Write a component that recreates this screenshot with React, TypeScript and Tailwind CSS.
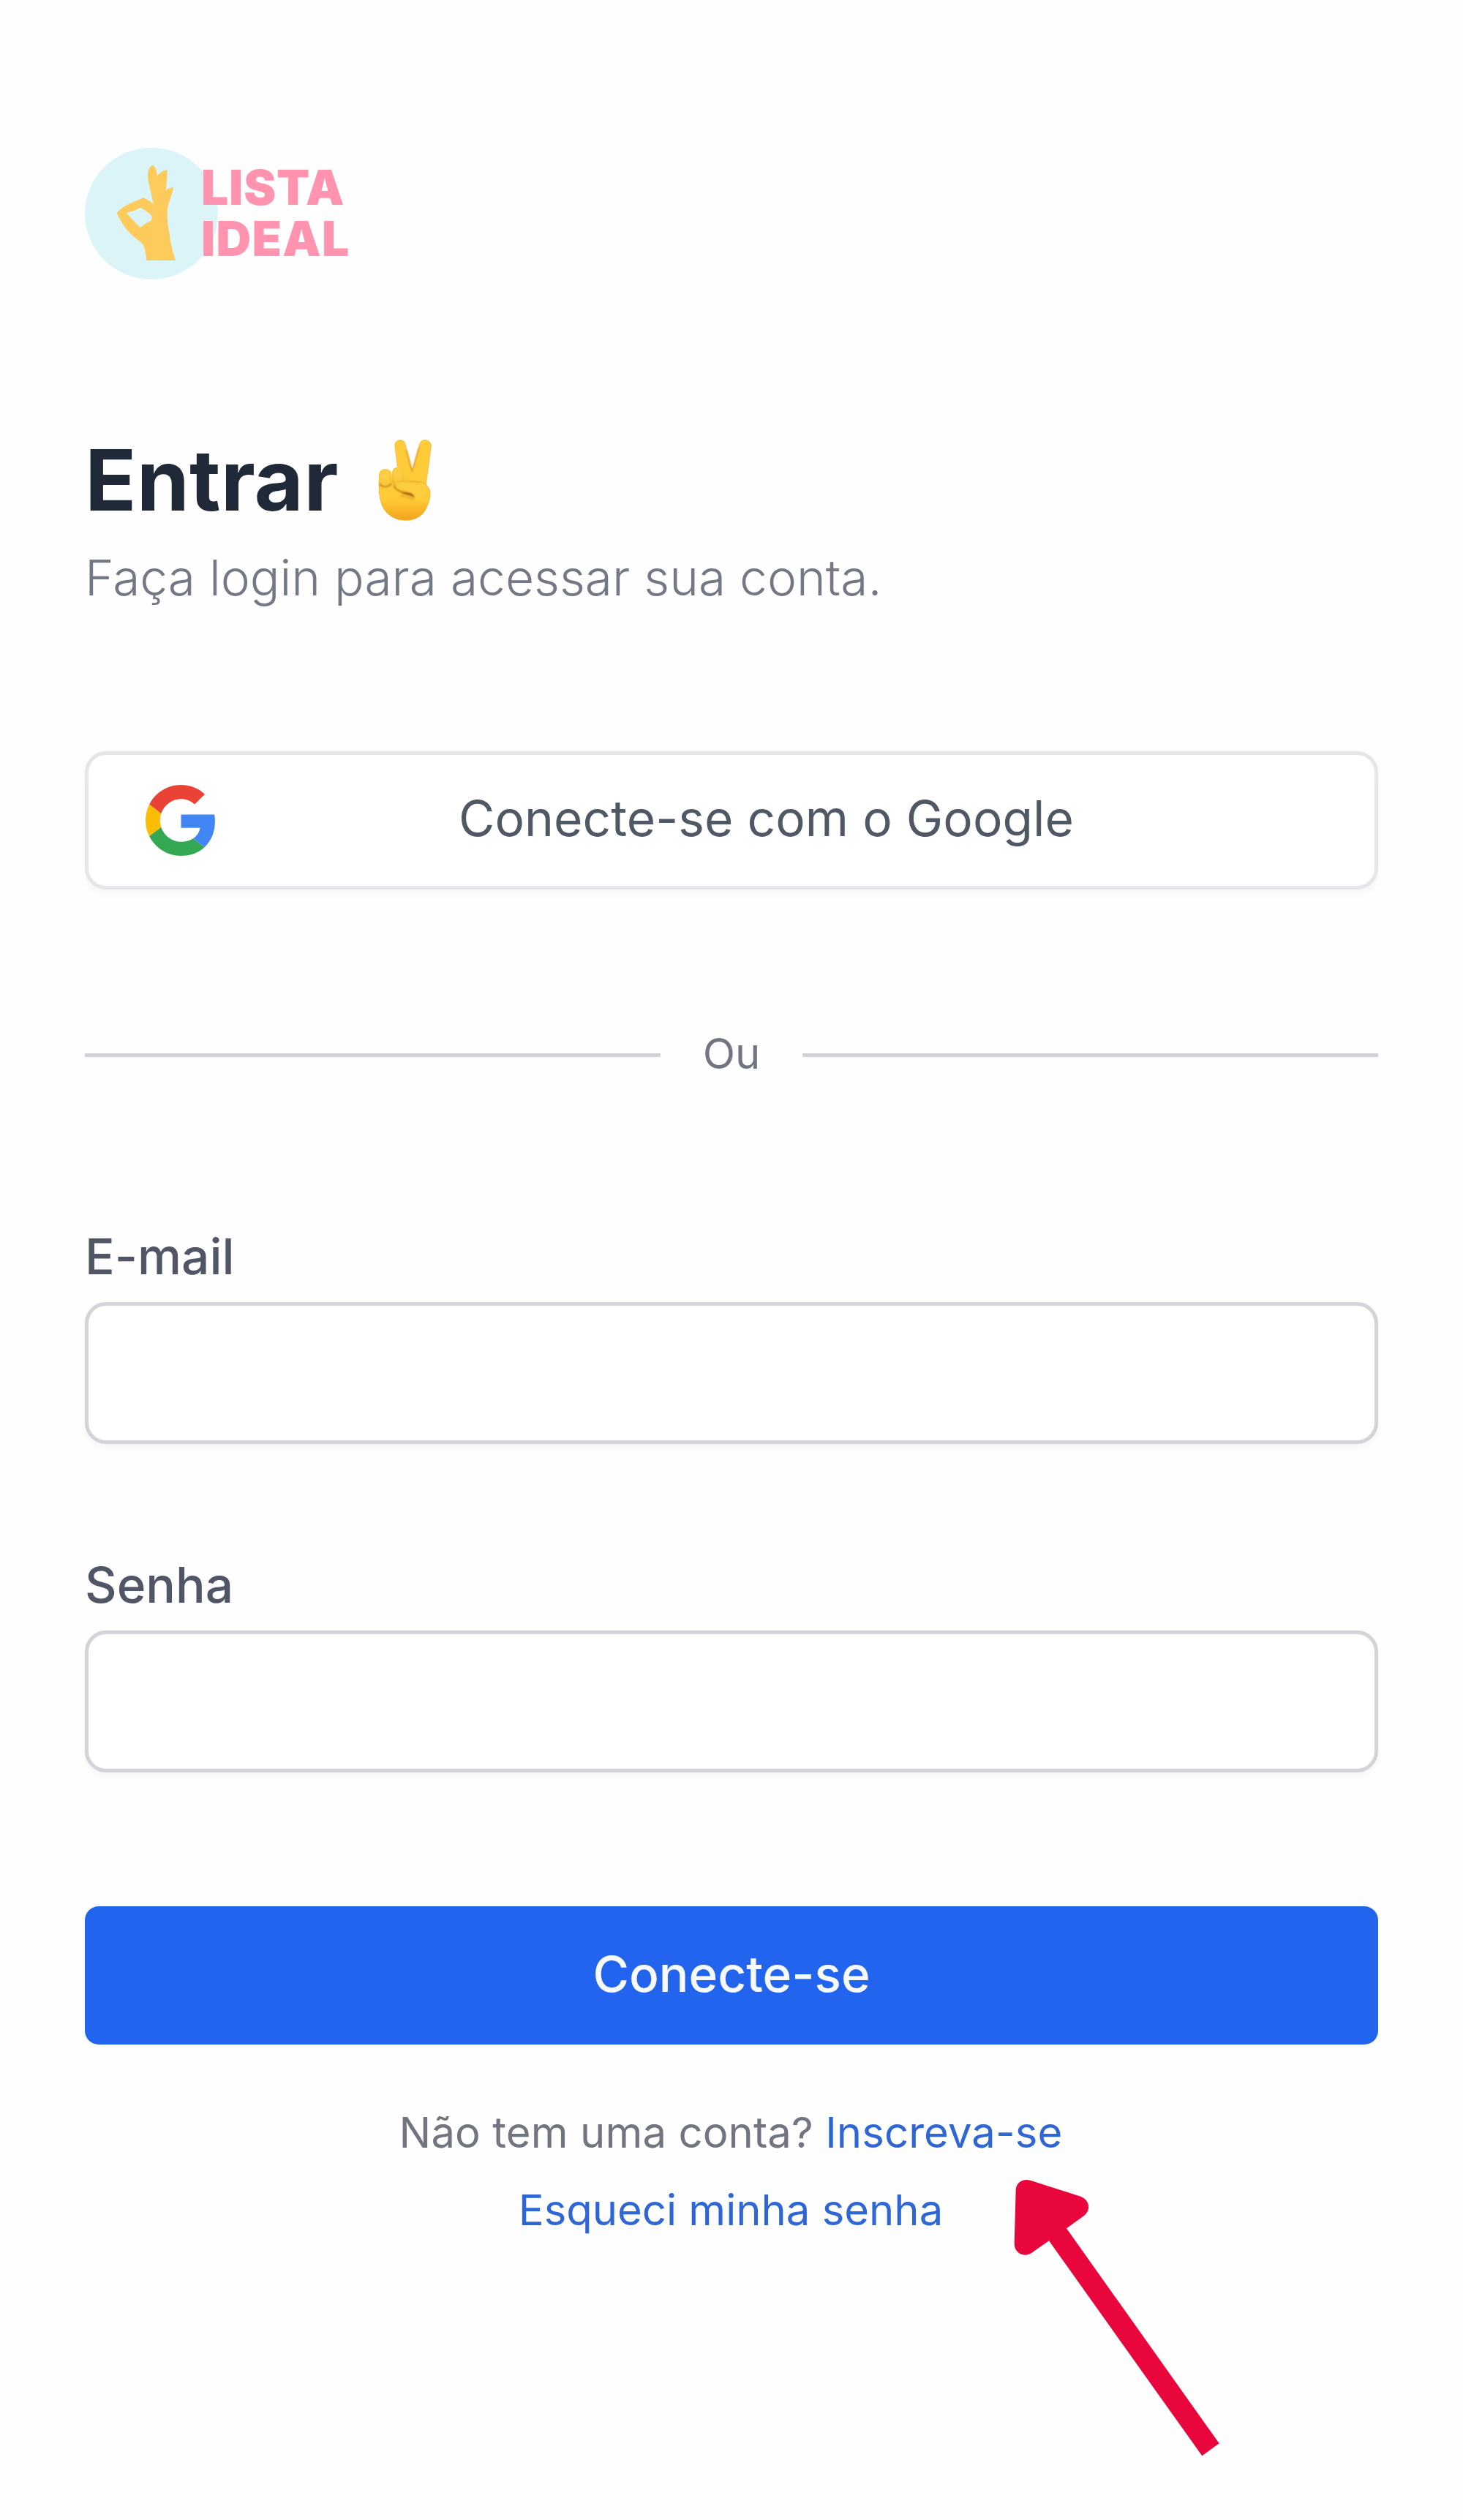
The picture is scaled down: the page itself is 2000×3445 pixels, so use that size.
import React from "react";

function Logo() {
  return (
    <div className="relative h-[180px] w-[364px]">
      <svg viewBox="50 66 546 540" className="h-[180px] w-[182px]" aria-hidden="true">
        <ellipse cx="323" cy="336" rx="273" ry="270" fill="#daf4f7" />
        <path
          fill="#fdcb5b"
          fillRule="evenodd"
          d="M331 298 C325 262 314 225 309 190 C307 163 313 141 330 138 C342 148 345 164 347 182 C358 170 370 158 387 157 C390 185 384 213 382 241 C391 235 400 229 413 229 C412 253 394 282 389 317 C386 350 390 385 397 420 C401 459 410 491 422 528 L303 528 C301 503 297 481 287 460 C262 438 233 420 213 390 C200 371 190 354 181 333 C192 319 207 310 223 301 C245 289 268 281 289 271 C306 277 319 286 331 298 Z M220 333 C240 328 260 322 278 312 C295 321 312 332 324 344 L324 364 C308 371 292 382 278 394 C257 374 238 353 220 333 Z"
        />
      </svg>
      <div className="absolute left-[159px] top-[19px] text-[66px] font-black leading-[70px] text-[#ff93b0]">
        <div className="tracking-[0.8px]">LISTA</div>
        <div className="tracking-[1.3px]">IDEAL</div>
      </div>
    </div>
  );
}

function VictoryHand() {
  return (
    <svg viewBox="0 0 330 390" className="h-[130px] w-[110px]" role="img" aria-label="✌️">
      <defs>
        <linearGradient id="palm" x1="0" y1="150" x2="0" y2="365" gradientUnits="userSpaceOnUse">
          <stop offset="0" stopColor="#ffd043" />
          <stop offset="0.6" stopColor="#ffca35" />
          <stop offset="1" stopColor="#f3a21f" />
        </linearGradient>
        <radialGradient id="knuckle" cx="0.5" cy="0.35" r="0.8">
          <stop offset="0" stopColor="#ffd24d" />
          <stop offset="0.65" stopColor="#fcc637" />
          <stop offset="1" stopColor="#dc9520" />
        </radialGradient>
        <filter id="soft" x="-30%" y="-60%" width="160%" height="220%">
          <feGaussianBlur stdDeviation="5" />
        </filter>
        <filter id="edge" x="-30%" y="-60%" width="160%" height="220%">
          <feGaussianBlur stdDeviation="2.5" />
        </filter>
      </defs>
      <path
        d="M117 62 C112 36 145 24 158 47 L188 160 L218 50 C227 25 266 31 265 60 L244 218 L238 250 L140 250 Z"
        fill="#ffcb38"
        stroke="#eeb02c"
        strokeWidth="2"
      />
      <path d="M163 75 L187 163 L216 65" fill="none" stroke="#dc9a22" strokeWidth="4" filter="url(#edge)" />
      <path
        d="M52 190 C50 240 52 275 66 307 C86 347 120 364 164 364 C208 363 238 339 250 303 C262 275 269 242 247 220 C234 206 210 204 186 205 L130 180 Z"
        fill="url(#palm)"
        stroke="#eba425"
        strokeWidth="2"
      />
      <rect x="51" y="153" width="53" height="75" rx="25" fill="url(#knuckle)" />
      <rect x="105" y="146" width="47" height="74" rx="22" fill="url(#knuckle)" />
      <path d="M54 214 C62 232 90 230 104 212" fill="none" stroke="#c98418" strokeWidth="5" filter="url(#edge)" />
      <path
        d="M122 207 C145 203 190 202 214 210 C243 219 252 243 236 264 L204 280 C206 256 178 248 151 244 C130 240 118 225 122 207 Z"
        fill="#ffcd40"
      />
      <path d="M124 207 C150 202 195 204 220 210" fill="none" stroke="#dda02a" strokeWidth="3" filter="url(#edge)" />
      <path d="M112 220 C120 242 140 248 160 251" fill="none" stroke="#c98116" strokeWidth="6" filter="url(#edge)" />
      <path d="M148 252 C168 249 190 252 194 268 C182 260 165 259 148 252 Z" fill="#93530a" stroke="#a9650e" strokeWidth="4" filter="url(#edge)" />
      <path d="M140 262 C160 266 180 268 190 280" fill="none" stroke="#eba82a" strokeWidth="8" filter="url(#soft)" />
    </svg>
  );
}

function GoogleMark() {
  return (
    <svg viewBox="0 0 48 48" className="size-[97px] shrink-0" aria-hidden="true">
      <path fill="#EA4335" d="M24 9.5c3.54 0 6.71 1.22 9.21 3.6l6.85-6.85C35.9 2.38 30.47 0 24 0 14.62 0 6.51 5.38 2.56 13.22l7.98 6.19C12.43 13.72 17.74 9.5 24 9.5z" />
      <path fill="#4285F4" d="M46.98 24.55c0-1.57-.15-3.09-.38-4.55H24v9.02h12.94c-.58 2.96-2.26 5.48-4.78 7.18l7.73 6c4.51-4.18 7.09-10.36 7.09-17.65z" />
      <path fill="#FBBC05" d="M10.53 28.59c-.48-1.45-.76-2.99-.76-4.59s.27-3.14.76-4.59l-7.98-6.19C.92 16.46 0 20.12 0 24c0 3.88.92 7.54 2.56 10.78l7.97-6.19z" />
      <path fill="#34A853" d="M24 48c6.48 0 11.93-2.13 15.89-5.81l-7.73-6c-2.15 1.45-4.92 2.3-8.16 2.3-6.26 0-11.57-4.22-13.47-9.91l-7.98 6.19C6.51 42.62 14.62 48 24 48z" />
    </svg>
  );
}

function Field({ id, label, type }: { id: string; label: string; type: string }) {
  return (
    <div className="flex flex-col gap-[14px]">
      <label htmlFor={id} className="text-[67.6px] font-medium leading-[97px] text-[#505666]">
        {label}
      </label>
      <input
        id={id}
        type={type}
        className="h-[194px] w-full rounded-[29px] border-[5px] border-[#d3d3d9] bg-white px-[58px] text-[67.6px] shadow-[0_5px_10px_rgba(0,0,0,0.04)] outline-none"
      />
    </div>
  );
}

function PointerArrow() {
  return (
    <svg viewBox="0 0 990 1260" className="absolute left-[1360px] top-[2960px] h-[420px] w-[330px]" aria-hidden="true">
      <path
        fill="#e9063c"
        d="M86 100 C88 72 112 54 146 62 L352 128 C388 142 396 182 366 207 L294 259 L920 1141 L850 1192 L222 310 L149 361 C117 380 80 359 80 322 Z"
      />
    </svg>
  );
}

export default function App() {
  return (
    <main className="relative flex h-[3445px] w-[2000px] flex-col overflow-hidden bg-[#fefefe] px-[116px] pt-[202px] font-['Inter',sans-serif] antialiased">
      <Logo />

      <h1 className="mt-[204px] flex h-[140px] items-center text-[116px] font-bold leading-[140px] tracking-[0.2px] text-[#1f2937]">
        Entrar
        <span className="ml-[38px] -mt-[2px]">
          <VictoryHand />
        </span>
      </h1>
      <p className="mt-[15px] whitespace-nowrap text-[67.6px] font-light leading-[97px] text-[#737885]">
        Faça login para acessar sua conta.
      </p>

      <button
        type="button"
        className="mt-[189px] flex h-[189px] items-center rounded-[29px] border-[5px] border-[#e6e6ea] bg-white pl-[78px] pr-[80px] text-[67.6px] text-[#505866] shadow-[0_5px_10px_rgba(0,0,0,0.04)]"
      >
        <GoogleMark />
        <span className="flex-1 whitespace-nowrap pb-[6px] text-center tracking-[0.06px]">Conecte-se com o Google</span>
      </button>

      <div className="mt-[187px] flex h-[78px] items-center gap-[58px]">
        <div className="h-[5px] flex-1 bg-[#d1d1d8]" />
        <span className="pb-1 text-[58px] leading-[74px] text-[#71757f]">Ou</span>
        <div className="h-[5px] flex-1 bg-[#d1d1d8]" />
      </div>

      <form className="mt-[188px] flex flex-col" onSubmit={(e) => e.preventDefault()}>
        <div className="flex flex-col gap-[144px]">
          <Field id="email" label="E-mail" type="email" />
          <Field id="senha" label="Senha" type="password" />
        </div>
        <button
          type="submit"
          className="mt-[183px] flex h-[189px] items-center justify-center rounded-[19px] bg-[#2364ee] pb-1 text-[67.6px] font-medium text-[#f6faff]"
        >
          Conecte-se
        </button>
      </form>

      <div className="mt-[67px] flex flex-col items-center whitespace-nowrap text-[58px] leading-[106px] text-[#71757f]">
        <p className="-ml-[2px] tracking-[0.1px]">
          Não tem uma conta? <a className="text-[#2f66d6]">Inscreva-se</a>
        </p>
        <a className="-ml-[2px] text-[#2f66d6]">Esqueci minha senha</a>
      </div>

      <PointerArrow />
    </main>
  );
}
